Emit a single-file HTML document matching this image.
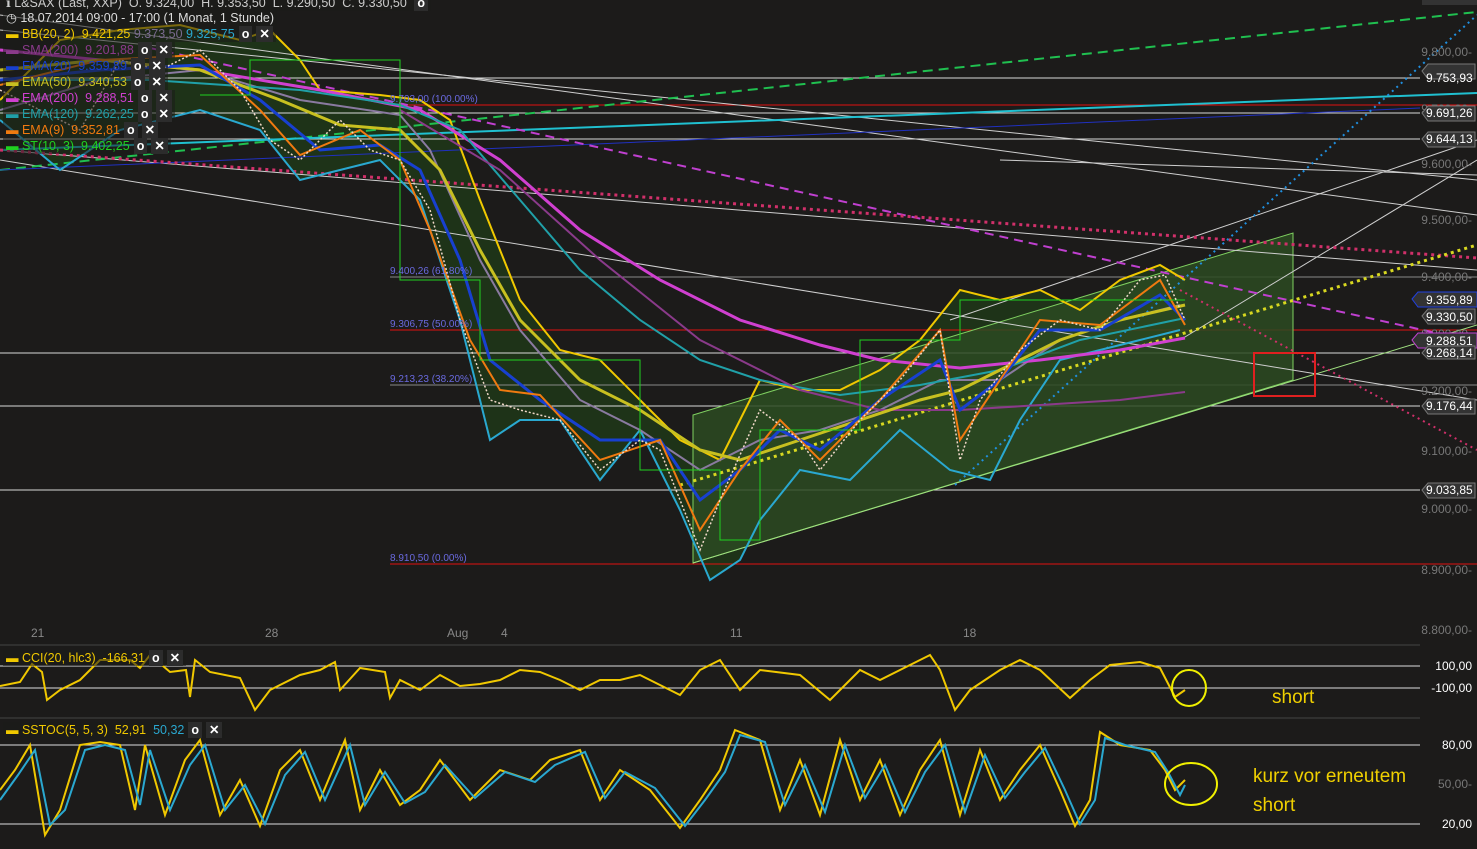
<!DOCTYPE html>
<html><head><meta charset="utf-8"><style>
html,body{margin:0;padding:0;background:#1c1b1a;}
body{width:1477px;height:849px;overflow:hidden;position:relative;font-family:"Liberation Sans",sans-serif;}
svg{position:absolute;left:0;top:0}
.lg{position:absolute;font-size:12.5px;white-space:nowrap;background:rgba(28,27,26,0.55);padding:0 3px;line-height:16px}
.ic{display:inline-block;background:#2c2c2c;color:#fff;font-weight:bold;padding:0 3px;margin-left:4px}
.ax{font-size:12px;fill:#777}
.tag{font-size:12px;fill:#fff}
</style></head><body>
<svg width="1477" height="849" viewBox="0 0 1477 849">
<!-- BB fill -->
<polygon fill="#1f3a18" fill-opacity="0.8" points="0,100 60,40 120,30 180,25 240,40 270,30 300,60 320,90 380,95 420,100 450,120 480,200 520,300 560,350 600,360 640,400 680,440 720,460 760,380 800,390 840,390 880,370 920,340 960,290 1000,300 1040,290 1080,310 1120,280 1160,265 1185,280 1180,330 1140,340 1100,350 1060,360 1020,420 990,480 950,470 900,430 850,480 800,470 760,520 740,560 710,580 680,510 640,430 600,480 560,420 520,420 490,440 460,320 420,200 380,160 340,170 300,180 260,130 200,110 120,130 60,170 0,120"/>
<!-- horizontal grid lines -->
<g stroke="#d8d8d8" stroke-width="1">
<line x1="0" y1="78" x2="1420" y2="78"/>
<line x1="0" y1="113" x2="1420" y2="113"/>
<line x1="0" y1="139" x2="1420" y2="139"/>
<line x1="0" y1="353" x2="1420" y2="353"/>
<line x1="0" y1="406" x2="1420" y2="406"/>
<line x1="0" y1="490" x2="1420" y2="490"/>
</g>
<g stroke="#e01010" stroke-width="1">
<line x1="390" y1="105" x2="1477" y2="105"/>
<line x1="390" y1="330" x2="1477" y2="330"/>
<line x1="390" y1="564" x2="1477" y2="564"/>
</g>
<g stroke="#888" stroke-width="1">
<line x1="390" y1="277" x2="1477" y2="277"/>
<line x1="390" y1="385" x2="1477" y2="385"/>
</g>
<!-- channel -->
<polygon points="693,415 1293,233 1293,380 693,563" fill="#2c4a22" fill-opacity="0.85" stroke="#7fd060" stroke-width="1"/>
<line x1="693" y1="563" x2="1477" y2="325" stroke="#a0e080" stroke-width="1"/>
<!-- diagonal white lines -->
<g stroke="#cfcfcf" stroke-width="1" fill="none">
<line x1="0" y1="15" x2="1477" y2="215"/>
<line x1="0" y1="30" x2="1477" y2="180"/>
<line x1="0" y1="160" x2="1477" y2="400"/>
<line x1="0" y1="150" x2="1477" y2="270"/>
<line x1="950" y1="320" x2="1477" y2="140"/>
<line x1="1180" y1="340" x2="1477" y2="160"/>
<line x1="1000" y1="160" x2="1477" y2="175"/>
</g>
<!-- colored trend lines -->
<line x1="0" y1="170" x2="1477" y2="12" stroke="#20c050" stroke-width="2" stroke-dasharray="10,6"/>
<line x1="0" y1="150" x2="1477" y2="93" stroke="#20c0d0" stroke-width="2"/>
<line x1="0" y1="170" x2="1420" y2="108" stroke="#2030c0" stroke-width="1"/>
<line x1="150" y1="48" x2="1477" y2="342" stroke="#c040d0" stroke-width="2" stroke-dasharray="9,6"/>
<line x1="0" y1="150" x2="1477" y2="258" stroke="#d0306a" stroke-width="3" stroke-dasharray="3,4"/>
<line x1="1180" y1="290" x2="1477" y2="450" stroke="#d0306a" stroke-width="2" stroke-dasharray="2,4"/>
<line x1="680" y1="485" x2="1477" y2="245" stroke="#d8d820" stroke-width="3" stroke-dasharray="3,4"/>
<line x1="955" y1="485" x2="1477" y2="15" stroke="#2090e0" stroke-width="2" stroke-dasharray="2,4"/>
<!-- Bollinger upper -->
<polyline fill="none" stroke="#f0c800" stroke-width="2" points="0,100 60,40 120,30 180,25 240,40 270,30 300,60 320,90 380,95 420,100 450,120 480,200 520,300 560,350 600,360 640,400 680,440 720,460 760,380 800,390 840,390 880,370 920,340 960,290 1000,300 1040,290 1080,310 1120,280 1160,265 1185,280"/>
<!-- Bollinger lower -->
<polyline fill="none" stroke="#2aa8d0" stroke-width="2" points="0,120 60,170 120,130 200,110 260,130 300,180 340,170 380,160 420,200 460,320 490,440 520,420 560,420 600,480 640,430 680,510 710,580 740,560 760,520 800,470 850,480 900,430 950,470 990,480 1020,420 1060,360 1100,350 1140,340 1180,330"/>
<!-- BB mid -->
<polyline fill="none" stroke="#8a7aa0" stroke-width="2" points="0,110 100,80 200,70 300,100 400,115 430,150 480,260 520,330 580,400 640,430 700,470 760,440 820,430 880,410 940,380 1000,380 1060,340 1120,320 1180,305"/>
<!-- EMA200 magenta -->
<polyline fill="none" stroke="#d040d0" stroke-width="3" points="0,50 200,70 320,90 420,110 500,160 580,230 660,280 740,320 820,345 880,360 960,368 1040,360 1120,350 1185,338"/>
<!-- EMA120 teal -->
<polyline fill="none" stroke="#20a0a8" stroke-width="2" points="0,80 150,80 300,90 400,105 460,130 520,200 580,270 640,320 700,360 760,380 840,395 920,385 1000,370 1080,340 1185,318"/>
<!-- SMA200 -->
<polyline fill="none" stroke="#8a3a8a" stroke-width="2" points="400,110 500,170 600,260 700,340 800,390 880,410 960,410 1040,405 1120,400 1185,392"/>
<!-- EMA50 -->
<polyline fill="none" stroke="#c8c020" stroke-width="3" points="0,70 100,60 200,70 280,100 340,125 400,130 440,170 480,250 520,320 580,380 640,410 700,450 740,460 800,440 860,420 920,400 960,390 1000,370 1060,340 1120,320 1185,305"/>
<!-- EMA20 blue -->
<polyline fill="none" stroke="#1840d0" stroke-width="3" points="0,80 100,70 200,65 260,100 320,150 380,145 420,170 460,260 490,360 540,400 600,440 660,440 700,500 740,470 780,430 820,450 880,400 940,360 960,410 1000,380 1040,330 1100,330 1160,295 1185,320"/>
<!-- EMA9 orange -->
<polyline fill="none" stroke="#f07a10" stroke-width="2" points="0,85 100,60 200,55 260,110 300,155 360,130 400,160 430,230 470,340 500,390 540,395 600,460 660,440 700,530 740,470 780,420 820,460 880,400 940,330 960,440 1000,380 1040,320 1100,325 1160,280 1185,325"/>
<!-- ST green -->
<polyline fill="none" stroke="#20d020" stroke-width="1" points="200,95 250,95 250,60 400,60 400,280 480,280 480,360 640,360 640,470 720,470 720,540 760,540 760,430 860,430 860,340 960,340 960,300 1185,300"/>
<!-- candles approximation -->
<polyline fill="none" stroke="#f0d8c8" stroke-width="1.5" points="0,90 40,110 80,130 120,60 160,70 200,50 240,90 270,140 300,160 340,120 370,150 400,160 430,210 460,320 490,400 520,410 560,420 600,470 640,440 660,450 700,550 720,500 760,410 800,440 820,470 860,420 900,380 940,330 960,460 980,400 1020,350 1060,320 1100,330 1140,280 1165,275 1185,320" stroke-dasharray="2,2"/>
<!-- red box -->
<rect x="1254" y="353" width="61" height="43" fill="none" stroke="#e02020" stroke-width="2"/>
<!-- axis labels -->
<g class="ax" text-anchor="end">
<text x="1472" y="56">9.800,00-</text>
<text x="1472" y="113">9.700,00-</text>
<text x="1472" y="168">9.600,00-</text>
<text x="1472" y="224">9.500,00-</text>
<text x="1472" y="281">9.400,00-</text>
<text x="1472" y="338">9.300,00-</text>
<text x="1472" y="395">9.200,00-</text>
<text x="1472" y="455">9.100,00-</text>
<text x="1472" y="513">9.000,00-</text>
<text x="1472" y="574">8.900,00-</text>
<text x="1472" y="634">8.800,00-</text>
</g>
<!-- price tags -->
<g>
<path d="M1422,71 l6,-7 h47 v15 h-47 z" fill="#333" stroke="#777"/><text class="tag" x="1426" y="82">9.753,93</text>
<path d="M1422,113 l6,-7 h47 v15 h-47 z" fill="#333" stroke="#777"/><text class="tag" x="1426" y="117">9.691,26</text>
<path d="M1422,139 l6,-7 h47 v15 h-47 z" fill="#333" stroke="#777"/><text class="tag" x="1426" y="143">9.644,13</text>
<path d="M1412,299 l6,-7 h59 v15 h-59 z" fill="#333" stroke="#2040e0"/><text class="tag" x="1426" y="304">9.359,89</text>
<path d="M1422,316 l6,-7 h47 v15 h-47 z" fill="#333" stroke="#777"/><text class="tag" x="1426" y="321">9.330,50</text>
<path d="M1412,340 l6,-7 h59 v15 h-59 z" fill="#333" stroke="#c040d0"/><text class="tag" x="1426" y="345">9.288,51</text>
<path d="M1422,353 l6,-7 h47 v13 h-47 z" fill="#333" stroke="#777"/><text class="tag" x="1426" y="357">9.268,14</text>
<path d="M1422,406 l6,-7 h47 v15 h-47 z" fill="#333" stroke="#777"/><text class="tag" x="1426" y="410">9.176,44</text>
<path d="M1422,490 l6,-7 h47 v15 h-47 z" fill="#333" stroke="#777"/><text class="tag" x="1426" y="494">9.033,85</text>
<path d="M1422,0 h55 v5 h-55 z" fill="#333"/>
</g>
<!-- fib labels -->
<g font-size="10" fill="#6a6ae0">
<text x="390" y="102">9.703,00 (100.00%)</text>
<text x="390" y="274">9.400,26 (61.80%)</text>
<text x="390" y="327">9.306,75 (50.00%)</text>
<text x="390" y="382">9.213,23 (38.20%)</text>
<text x="390" y="561">8.910,50 (0.00%)</text>
</g>
<!-- date axis -->
<g font-size="12" fill="#888">
<text x="31" y="637">21</text><text x="265" y="637">28</text><text x="447" y="637">Aug</text><text x="501" y="637">4</text><text x="730" y="637">11</text><text x="963" y="637">18</text>
</g>
<line x1="0" y1="645" x2="1420" y2="645" stroke="#444"/>
<line x1="0" y1="718" x2="1420" y2="718" stroke="#444"/>
<!-- CCI panel -->
<line x1="0" y1="666" x2="1420" y2="666" stroke="#ddd"/>
<line x1="0" y1="688" x2="1420" y2="688" stroke="#ddd"/>
<polyline fill="none" stroke="#f0c800" stroke-width="2" points="0,686 20,682 32,664 42,672 47,700 60,690 80,680 100,660 130,660 140,668 150,655 170,672 186,670 190,697 195,660 210,672 240,678 255,710 270,690 300,675 320,670 335,662 340,690 360,668 385,672 390,698 400,680 420,690 440,675 460,686 480,684 500,680 520,670 540,672 560,680 580,690 600,680 620,680 640,675 680,695 700,670 720,660 740,690 760,670 800,675 830,700 860,670 880,680 900,670 930,655 940,670 955,710 970,690 1000,670 1020,660 1040,670 1070,698 1090,680 1110,665 1140,662 1160,668 1175,697 1185,690"/>
<g class="ax" text-anchor="end"><text x="1472" y="670" fill="#fff">100,00</text><text x="1472" y="692" fill="#fff">-100,00</text></g>
<ellipse cx="1189" cy="688" rx="17" ry="18" fill="none" stroke="#f0f000" stroke-width="2"/>
<text x="1272" y="703" font-size="19" fill="#f0d000">short</text>
<!-- SSTOC panel -->
<line x1="0" y1="745" x2="1420" y2="745" stroke="#ddd"/>
<line x1="0" y1="824" x2="1420" y2="824" stroke="#ddd"/>
<polyline fill="none" stroke="#f0c800" stroke-width="2" points="0,790 15,770 30,745 45,835 60,810 80,745 100,742 120,745 135,810 145,745 165,815 185,760 200,740 220,815 240,780 260,826 280,770 300,750 320,800 345,740 360,810 380,770 400,805 420,790 440,760 470,800 500,770 530,780 550,760 580,750 600,800 620,770 650,790 680,828 700,800 720,770 735,730 760,740 780,810 800,760 820,815 840,740 860,800 880,760 900,815 920,770 940,740 960,815 980,750 1000,800 1020,770 1040,745 1060,790 1075,826 1090,800 1100,732 1120,745 1150,750 1165,770 1175,790 1185,780"/>
<polyline fill="none" stroke="#2aa8d0" stroke-width="2" points="0,800 18,775 35,750 50,825 65,810 85,750 105,745 125,750 140,805 150,750 170,810 190,765 205,745 225,810 245,785 265,824 285,775 305,752 325,800 350,745 365,805 385,772 405,803 425,792 445,765 475,798 505,772 535,782 555,765 585,752 605,798 625,772 655,788 685,826 705,800 725,772 740,735 765,742 785,805 805,765 825,812 845,745 865,798 885,765 905,812 925,772 945,745 965,812 985,755 1005,798 1025,772 1045,748 1065,790 1080,824 1095,800 1105,738 1125,745 1155,752 1168,772 1180,795 1185,785"/>
<g class="ax" text-anchor="end"><text x="1472" y="749" fill="#fff">80,00</text><text x="1472" y="788">50,00-</text><text x="1472" y="828" fill="#fff">20,00</text></g>
<ellipse cx="1191" cy="784" rx="26" ry="21" fill="none" stroke="#f0f000" stroke-width="2"/>
<text x="1253" y="782" font-size="19" fill="#f0d000">kurz vor erneutem</text>
<text x="1253" y="811" font-size="19" fill="#f0d000">short</text>
</svg>
<div class="lg" style="left:3px;top:-5px;color:#ccc">ℹ L&amp;SAX (Last, XXP)&nbsp; O. 9.324,00&nbsp; H. 9.353,50&nbsp; L. 9.290,50&nbsp; C. 9.330,50 <span class="ic">o</span></div>
<div class="lg" style="left:3px;top:10px;color:#ddd">◷ 18.07.2014 09:00 - 17:00 (1 Monat, 1 Stunde)</div>
<div class="lg" style="left:3px;top:26px;color:#f0c800">▬ BB(20, 2)&nbsp; 9.421,25 <span style="color:#7a6a90">9.373,50</span> <span style="color:#2aa8d0">9.325,75</span><span class="ic">o</span><span class="ic">✕</span></div>
<div class="lg" style="left:3px;top:42px;color:#8a3a8a">▬ SMA(200)&nbsp; 9.201,88<span class="ic">o</span><span class="ic">✕</span></div>
<div class="lg" style="left:3px;top:58px;color:#1840d0">▬ EMA(20)&nbsp; 9.359,89<span class="ic">o</span><span class="ic">✕</span></div>
<div class="lg" style="left:3px;top:74px;color:#c8c020">▬ EMA(50)&nbsp; 9.340,53<span class="ic">o</span><span class="ic">✕</span></div>
<div class="lg" style="left:3px;top:90px;color:#d040d0">▬ EMA(200)&nbsp; 9.288,51<span class="ic">o</span><span class="ic">✕</span></div>
<div class="lg" style="left:3px;top:106px;color:#20a0a8">▬ EMA(120)&nbsp; 9.262,25<span class="ic">o</span><span class="ic">✕</span></div>
<div class="lg" style="left:3px;top:122px;color:#f07a10">▬ EMA(9)&nbsp; 9.352,81<span class="ic">o</span><span class="ic">✕</span></div>
<div class="lg" style="left:3px;top:138px;color:#20d020">▬ ST(10, 3)&nbsp; 9.402,25<span class="ic">o</span><span class="ic">✕</span></div>
<div class="lg" style="left:3px;top:650px;color:#f0c800">▬ CCI(20, hlc3)&nbsp; -166,31<span class="ic">o</span><span class="ic">✕</span></div>
<div class="lg" style="left:3px;top:722px;color:#f0c800">▬ SSTOC(5, 5, 3)&nbsp; 52,91&nbsp; <span style="color:#2aa8d0">50,32</span><span class="ic">o</span><span class="ic">✕</span></div>
</body></html>
